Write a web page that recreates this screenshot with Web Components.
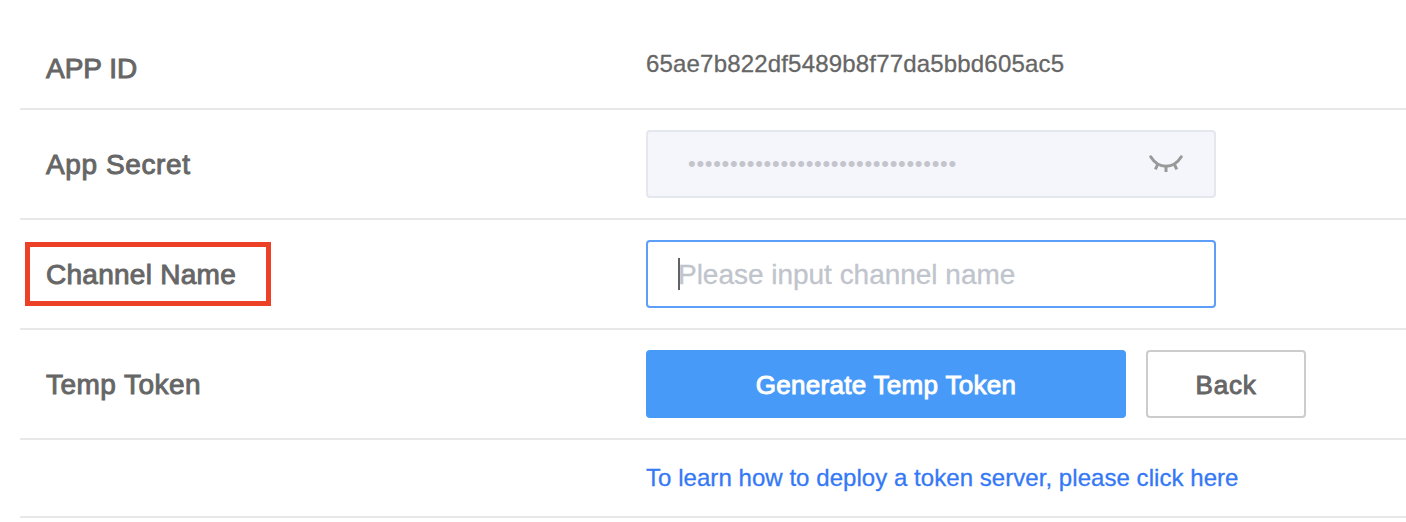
<!DOCTYPE html>
<html lang="en">
<head>
<meta charset="utf-8">
<title>Temp Token</title>
<style>
body{margin:0;background:#fff;overflow:hidden;font-family:"Liberation Sans",Arial,sans-serif;color:#666}
</style>
</head>
<body>
<token-page></token-page>
<script>
function define(name, markup) {
  const template = document.createElement('template');
  template.innerHTML = markup;
  customElements.define(name, class extends HTMLElement {
    connectedCallback() {
      if (this.shadowRoot) return;
      this.attachShadow({mode: 'open'}).append(template.content.cloneNode(true));
    }
  });
}

define('form-row', `
<style>
:host{display:grid;grid-template-columns:626px 1fr;height:108px;border-bottom:2px solid #e8e8e8;box-sizing:content-box}
.label{display:flex;align-items:center;padding:2px 0 0 26px;font-size:28px;line-height:34px;-webkit-text-stroke:.95px currentColor;white-space:nowrap}
.value{display:flex;align-items:center;gap:20px}
</style>
<div class="label"><slot name="label"></slot></div>
<div class="value"><slot></slot></div>`);

define('highlight-box', `
<style>
:host{display:block;position:relative}
.frame{position:absolute;left:-21px;top:-16px;width:246px;height:64px;box-sizing:border-box;border:5px solid #ec4127}
</style>
<slot></slot><div class="frame"></div>`);

define('secret-field', `
<style>
:host{display:flex;align-items:center;justify-content:space-between;box-sizing:border-box;width:570px;height:68px;border:2px solid #e4e7ed;border-radius:4px;background:#f5f6fb;padding:0 30px 0 40px;color:#c3c4cc}
.dots{font-size:22px;line-height:28px;letter-spacing:.7px}
svg{display:block}
</style>
<span class="dots">••••••••••••••••••••••••••••••••</span>
<svg width="36" height="22" viewBox="0 0 36 22" fill="none" stroke="#999" stroke-width="3"><path stroke-linecap="round" d="M2.7 3.8C10.5 16.4 25.5 16.4 33.3 3.8"/><path d="M9.6 11.5L7.4 16.4M18 13V19M26.4 11.5L28.8 16.4"/></svg>`);

define('text-field', `
<style>
:host{display:flex;align-items:center;box-sizing:border-box;width:570px;height:68px;border:2px solid #5c9ef8;border-radius:4px;background:#fff;padding-left:30px;color:#c0c4cc}
.caret{width:2px;height:32px;margin-right:-2px;background:#606266;position:relative}
.hint{font-size:28px;line-height:34px;padding-top:2px;letter-spacing:-.02px;-webkit-text-stroke:.3px currentColor}
</style>
<span class="caret"></span><span class="hint"><slot></slot></span>`);

define('action-button', `
<style>
:host{display:block}
button{display:flex;align-items:center;justify-content:center;box-sizing:border-box;width:160px;height:68px;margin:0;padding:2px 0 0;border:2px solid #ccc;border-radius:4px;background:#fff;color:#666;font:26px/32px "Liberation Sans",Arial,sans-serif;letter-spacing:.8px;-webkit-text-stroke:.95px currentColor}
:host([primary]) button{width:480px;border-color:#479af7;background:#479af7;color:#fff;letter-spacing:.3px}
</style>
<button type="button"><slot></slot></button>`);

define('token-page', `
<style>
:host{display:block;padding:0 0 0 20px}
.first{height:80px;padding-top:28px}
.id{font-size:24px;line-height:28px;letter-spacing:.18px;margin-top:-9px;-webkit-text-stroke:.3px currentColor}
.last{height:76px}
a{color:#3478f6;font-size:24px;line-height:28px;text-decoration:none;letter-spacing:.05px;-webkit-text-stroke:.3px currentColor}
</style>
<form-row class="first"><span slot="label">APP ID</span><span class="id">65ae7b822df5489b8f77da5bbd605ac5</span></form-row>
<form-row><span slot="label" style="letter-spacing:.6px">App Secret</span><secret-field></secret-field></form-row>
<form-row><highlight-box slot="label" style="letter-spacing:.27px">Channel Name</highlight-box><text-field>Please input channel name</text-field></form-row>
<form-row><span slot="label" style="letter-spacing:.45px">Temp Token</span><action-button primary>Generate Temp Token</action-button><action-button>Back</action-button></form-row>
<form-row class="last"><a href="#">To learn how to deploy a token server, please click here</a></form-row>`);
</script>
</body>
</html>
